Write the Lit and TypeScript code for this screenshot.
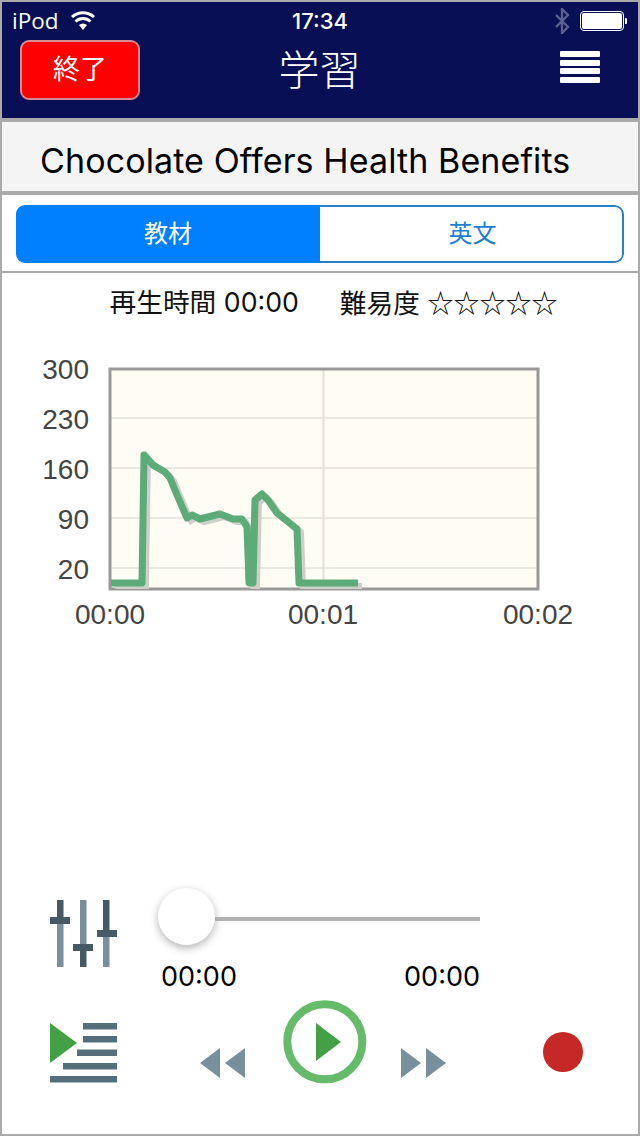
import { LitElement, html, css, svg } from 'lit';
import { customElement } from 'lit/decorators.js';

const LINE =
  '111,583 142,583 144,455 153,465 165,472 170,478 177,495 187,518 192,515 200,519 220,514 233,519 242,519 247,527 249,583 253,583 255,500 262,494 268,500 277,513 297,529 299,583 358,583';

const GRID_Y = [418, 468, 518, 568];
const Y_LABELS: [string, number][] = [
  ['300', 379],
  ['230', 429],
  ['160', 479],
  ['90', 529],
  ['20', 579],
];
const X_LABELS: [string, number][] = [
  ['00:00', 110],
  ['00:01', 323],
  ['00:02', 538],
];

@customElement('app-root')
export class AppRoot extends LitElement {
  static styles = css`
    :host {
      display: block;
      font-family: Inter, 'Noto Sans CJK JP', sans-serif;
    }
    .page {
      box-sizing: border-box;
      width: 640px;
      height: 1136px;
      border: 2px solid #aaa;
      display: flex;
      flex-direction: column;
      background: #fff;
    }
    .head {
      height: 116px;
      background: #080f55;
      color: #fff;
      border-bottom: 4px solid #aaa;
      flex: none;
    }
    .status {
      height: 38px;
      display: grid;
      grid-template-columns: 290px auto 1fr;
      align-items: center;
      line-height: 38px;
    }
    .carrier {
      display: flex;
      align-items: center;
      gap: 11px;
      padding-left: 10px;
      font-family: 'Open Sans', sans-serif;
      font-size: 22.5px;
    }
    .time {
      font-weight: 500;
      font-size: 22px;
    }
    .right {
      display: flex;
      justify-content: flex-end;
      align-items: center;
      gap: 10px;
      padding-right: 11px;
    }
    .nav {
      display: grid;
      grid-template-columns: 1fr auto 1fr;
      align-items: center;
      height: 60px;
      padding: 0 36px 0 18px;
    }
    .quit {
      box-sizing: border-box;
      width: 120px;
      height: 60px;
      background: #fe0000;
      border: 2px solid #d98a92;
      border-radius: 9px;
      font-size: 27px;
      line-height: 56px;
      text-align: center;
    }
    .title {
      font-size: 41px;
      line-height: 60px;
      text-align: center;
      font-weight: 300;
      margin-left: 17px;
    }
    .burger {
      justify-self: end;
      width: 40px;
      display: flex;
      flex-direction: column;
      gap: 2.5px;
      margin-top: -6px;
      margin-right: 2px;
    }
    .burger span {
      height: 6px;
      background: #fff;
      border-radius: 1px;
    }
    .lesson {
      flex: none;
      box-sizing: border-box;
      background: #f4f4f4;
      border-bottom: 4px solid #aaa;
      height: 73px;
      padding-left: 38px;
      font-size: 34px;
      letter-spacing: 0.1px;
      line-height: 78px;
      color: #000;
      white-space: nowrap;
    }
    .tabs {
      flex: none;
      margin: 10px 14px 8px;
      height: 58px;
      display: flex;
      border-radius: 9px;
      overflow: hidden;
      font-size: 24px;
      line-height: 54px;
      text-align: center;
    }
    .tab {
      flex: 1;
      border: 2px solid #2a7fc9;
      border-left: 0;
      border-radius: 0 9px 9px 0;
      padding-left: 3px;
      color: #1a7fd0;
      background: #fff;
    }
    .tab.active {
      flex: none;
      width: 304px;
      border: 0;
      border-radius: 0;
      padding: 2px 0;
      color: #fff;
      background: #007fff;
    }
    .info {
      flex: none;
      box-sizing: border-box;
      border-top: 2px solid #aaa;
      height: 62px;
      display: flex;
      justify-content: center;
      gap: 41px;
      padding-left: 27px;
      font-size: 26.7px;
      line-height: 58px;
      color: #111;
      white-space: nowrap;
    }
    .stars {
      font-family: 'Noto Sans CJK JP', sans-serif;
      font-size: 26px;
    }
    .chart {
      display: block;
      flex: none;
      overflow: visible;
    }
    .chart text {
      font-family: 'Liberation Sans', sans-serif;
      font-size: 28px;
      fill: #444;
    }
    .soft {
      filter: blur(0.6px);
    }
    .controls {
      margin-top: auto;
      padding-bottom: 49px;
    }
    .top {
      display: flex;
      padding-left: 46px;
    }
    .sliders {
      display: block;
      flex: none;
      margin-top: 10px;
    }
    .seek {
      width: 322px;
      margin-left: 38px;
    }
    .bar {
      display: flex;
      align-items: center;
    }
    .thumb {
      width: 57px;
      height: 57px;
      flex: none;
      background: #fff;
      border-radius: 50%;
      box-shadow: 0 3px 8px rgba(0, 0, 0, 0.3);
    }
    .track {
      flex: 1;
      height: 4px;
      background: #b0b0b0;
      margin-top: 4px;
    }
    .times {
      display: flex;
      justify-content: space-between;
      padding-left: 3px;
      font-size: 27px;
      line-height: 32px;
      margin-top: 16px;
      color: #000;
    }
    .buttons {
      display: flex;
      margin-top: 7px;
      height: 85px;
      padding-left: 46px;
      align-items: flex-start;
    }
    .buttons svg {
      display: block;
      flex: none;
    }
    .list {
      margin-top: 21px;
    }
    .back {
      margin: 47px 0 0 80px;
    }
    .play {
      margin-left: 37px;
    }
    .fwd {
      margin: 47px 0 0 34px;
    }
    .rec {
      margin: 31px 0 0 95px;
    }
  `;

  private chart() {
    return svg`
      <rect x="110" y="369" width="428" height="220" fill="#fffcf3" />
      ${GRID_Y.map(
        (y) => svg`<line x1="110" x2="538" y1=${y} y2=${y} stroke="#ebe8e0" stroke-width="2" />`
      )}
      <line x1="323.5" x2="323.5" y1="369" y2="589" stroke="#e3e1da" stroke-width="2" />
      <rect x="110" y="369" width="428" height="220" fill="none" stroke="#999" stroke-width="3" />
      <g class="soft">
        <polyline points=${LINE} fill="none" stroke="#cfcfca" stroke-width="6" transform="translate(4 3)" />
        <polyline points=${LINE} fill="none" stroke="#5cab78" stroke-width="7" stroke-linejoin="round" />
      </g>
      ${Y_LABELS.map(([t, y]) => svg`<text x="89" y=${y} text-anchor="end">${t}</text>`)}
      ${X_LABELS.map(([t, x]) => svg`<text x=${x} y="624" text-anchor="middle">${t}</text>`)}
    `;
  }

  render() {
    return html`
      <div class="page">
        <div class="head">
          <div class="status">
            <div class="carrier">
              <span>iPod</span>
              <svg width="26" height="20" viewBox="0 0 26 20">
                <path d="M13 19l-4-5a6 6 0 0 1 8 0z" fill="#fff" />
                <path d="M5.5 10.5a11 11 0 0 1 15 0" fill="none" stroke="#fff" stroke-width="3" />
                <path d="M2 6a16.5 16.5 0 0 1 22 0" fill="none" stroke="#fff" stroke-width="3" />
              </svg>
            </div>
            <div class="time">17:34</div>
            <div class="right">
              <svg width="16" height="26" viewBox="0 0 16 26">
                <path d="M2 7l12 12-6 6V1l6 6L2 19" fill="none" stroke="#5a6090" stroke-width="2.4" />
              </svg>
              <svg width="47" height="20" viewBox="0 0 47 20">
                <rect x="0.5" y="0.5" width="43" height="19" rx="3.5" fill="#080f55" stroke="#fff" />
                <rect x="2" y="2" width="40" height="16" rx="2" fill="#fff" />
                <path d="M45 7a3 3 0 0 1 0 6z" fill="#fff" />
              </svg>
            </div>
          </div>
          <div class="nav">
            <div class="quit">終了</div>
            <div class="title">学習</div>
            <div class="burger"><span></span><span></span><span></span><span></span></div>
          </div>
        </div>
        <div class="lesson">Chocolate Offers Health Benefits</div>
        <div class="tabs">
          <div class="tab active">教材</div>
          <div class="tab">英文</div>
        </div>
        <div class="info">
          <span>再生時間 00:00</span>
          <span>難易度 <span class="stars">☆☆☆☆☆</span></span>
        </div>
        <svg class="chart" width="636" height="312" viewBox="2 333 636 312">${this.chart()}</svg>
        <div class="controls">
          <div class="top">
            <svg class="sliders" width="72" height="72" viewBox="48 897 72 72">
              <rect x="57" y="899" width="6.5" height="17" fill="#455a64" />
              <rect x="57" y="923" width="6.5" height="43" fill="#78909c" />
              <rect x="50" y="916" width="20" height="7" fill="#455a64" />
              <rect x="80" y="899" width="6.5" height="44" fill="#78909c" />
              <rect x="80" y="949" width="6.5" height="17" fill="#455a64" />
              <rect x="73" y="943" width="20" height="7" fill="#455a64" />
              <rect x="103" y="899" width="6.5" height="30" fill="#455a64" />
              <rect x="103" y="936" width="6.5" height="30" fill="#78909c" />
              <rect x="97" y="929" width="20" height="7" fill="#455a64" />
            </svg>
            <div class="seek">
              <div class="bar">
                <div class="thumb"></div>
                <div class="track"></div>
              </div>
              <div class="times"><span>00:00</span><span>00:00</span></div>
            </div>
          </div>
          <div class="buttons">
            <svg class="list" width="72" height="64" viewBox="48 1021 72 64">
              <path d="M50 1023l27 20-27 20z" fill="#43a047" />
              <g fill="#546e7a">
                <rect x="83" y="1023" width="34" height="6.5" />
                <rect x="83" y="1036" width="34" height="6.5" />
                <rect x="77" y="1049.5" width="40" height="6.5" />
                <rect x="63" y="1063" width="54" height="6.5" />
                <rect x="50" y="1076" width="67" height="6.5" />
              </g>
            </svg>
            <svg class="back" width="46" height="32" viewBox="200 1047 46 32">
              <path d="M200 1063l20-15v30zM225 1063l20-15v30z" fill="#78909c" />
            </svg>
            <svg class="play" width="84" height="84" viewBox="283 1000 84 84">
              <circle cx="324.8" cy="1041.8" r="37.5" fill="none" stroke="#66bb6a" stroke-width="8" />
              <path d="M316 1023l25 19-25 19z" fill="#43a047" />
            </svg>
            <svg class="fwd" width="46" height="32" viewBox="400 1047 46 32">
              <path d="M400 1048l20 15-20 15zM425 1048l20 15-20 15z" fill="#78909c" />
            </svg>
            <svg class="rec" width="42" height="42" viewBox="542 1031 42 42">
              <circle cx="563" cy="1052" r="20" fill="#c62828" />
            </svg>
          </div>
        </div>
      </div>
    `;
  }
}
